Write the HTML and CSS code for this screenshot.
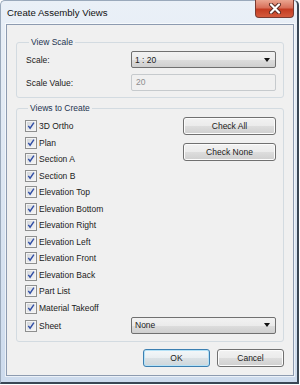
FILE: index.html
```html
<!DOCTYPE html>
<html>

<head>
    <meta charset="UTF-8">
    <title>Create Assembly Views</title>
    <link rel="stylesheet" href="styles.css">
</head>

<body>
    <div class="window">
        <div class="titlebar">
            <span class="title">Create Assembly Views</span>
            <div class="close">
                <svg width="14" height="11" viewBox="0 0 14 11">
                    <path d="M3 1.5 L11 9.5 M11 1.5 L3 9.5" stroke="#5a2a22" stroke-width="4" stroke-linecap="round" />
                    <path d="M3 1.5 L11 9.5 M11 1.5 L3 9.5" stroke="#fff" stroke-width="2.2" stroke-linecap="round" />
                </svg>
            </div>
        </div>

        <div class="client">
            <fieldset class="group scale-group">
                <legend>View Scale</legend>
                <div class="scale-grid">
                    <label>Scale:</label>
                    <div class="select"><span>1 : 20</span><i class="arrow"></i></div>
                    <label>Scale Value:</label>
                    <div class="textbox disabled">20</div>
                </div>
            </fieldset>

            <fieldset class="group views-group">
                <legend>Views to Create</legend>
                <div class="views">
                    <ul class="checks">
                        <li><span class="box"></span>3D Ortho</li>
                        <li><span class="box"></span>Plan</li>
                        <li><span class="box"></span>Section A</li>
                        <li><span class="box"></span>Section B</li>
                        <li><span class="box"></span>Elevation Top</li>
                        <li><span class="box"></span>Elevation Bottom</li>
                        <li><span class="box"></span>Elevation Right</li>
                        <li><span class="box"></span>Elevation Left</li>
                        <li><span class="box"></span>Elevation Front</li>
                        <li><span class="box"></span>Elevation Back</li>
                        <li><span class="box"></span>Part List</li>
                        <li><span class="box"></span>Material Takeoff</li>
                    </ul>
                    <div class="side-buttons">
                        <div class="btn">Check All</div>
                        <div class="btn">Check None</div>
                    </div>
                </div>
                <div class="sheet-row">
                    <div class="check-item"><span class="box"></span>Sheet</div>
                    <div class="select"><span>None</span><i class="arrow"></i></div>
                </div>
            </fieldset>

            <div class="footer">
                <div class="btn btn-default">OK</div>
                <div class="btn">Cancel</div>
            </div>
        </div>
    </div>
</body>

</html>
```

FILE: styles.css
```css
* {
    padding: 0;
    margin: 0;
    box-sizing: border-box;
}

ul {
    list-style: none;
}

body {
    background: #fff;
    font-family: "Liberation Sans", Arial, sans-serif;
    font-size: 8.5px;
    color: #1b1b1b;
}

.window {
    width: 299px;
    height: 384px;
    padding: 0 3px 0 5px;
    border: 1px solid #9aa9bb;
    border-right: 2px solid #3a4755;
    border-bottom: 2px solid #3a4755;
    border-radius: 5px 5px 0 0;
    background: linear-gradient(to bottom, #eaf0f7 0%, #dfe8f3 40%, #cddbed 100%);
    display: flex;
    flex-direction: column;
}

.titlebar {
    height: 23px;
    display: flex;
    align-items: flex-start;
}

.title {
    font-size: 9.6px;
    line-height: 12px;
    padding: 6px 0 0 1px;
    color: #111;
}

.close {
    margin-left: auto;
    margin-top: -1px;
    width: 39px;
    height: 18px;
    border: 1px solid #7a3a30;
    border-top: none;
    border-radius: 0 0 4px 4px;
    background: linear-gradient(to bottom, #eba590 0%, #d8705a 45%, #c43c22 55%, #d45a3c 100%);
    display: flex;
    align-items: center;
    justify-content: center;
}

.client {
    height: 352px;
    border: 1px solid #8d9bb0;
    box-shadow: 0 0 0 1px rgba(255, 255, 255, 0.6);
    background: #f0f0f0;
    padding: 0 9px 8px 9px;
    display: flex;
    flex-direction: column;
}

.group {
    border: 1px solid #d3dbe1;
    border-radius: 3px;
    min-width: 0;
}

.group legend {
    padding: 0 2px;
    margin-left: 3px;
    line-height: 12px;
    color: #1e3450;
}

.scale-group {
    margin-top: 11px;
    padding: 3px 7px 6px 9px;
}

.scale-grid {
    display: grid;
    grid-template-columns: 105px 1fr;
    grid-template-rows: 17px 17px;
    row-gap: 6px;
    align-items: center;
}

.select {
    height: 17px;
    border: 1px solid #707070;
    border-radius: 2px;
    background: linear-gradient(to bottom, #f2f2f2 0%, #ebebeb 50%, #dddddd 51%, #cfcfcf 100%);
    display: flex;
    align-items: center;
    padding: 0 5px 0 3px;
}

.arrow {
    margin-left: auto;
    width: 0;
    height: 0;
    border-left: 3.5px solid transparent;
    border-right: 3.5px solid transparent;
    border-top: 4px solid #111;
}

.textbox {
    height: 17px;
    border: 1px solid #c6cacd;
    border-radius: 2px;
    padding: 0 4px;
    line-height: 15px;
}

.disabled {
    color: #8e8e8e;
    background: #f0f0f0;
}

.views-group {
    margin-top: 4px;
    padding: 4px 7px 7px 8px;
}

.views {
    display: flex;
}

.checks li,
.check-item {
    height: 16.5px;
    display: flex;
    align-items: center;
}

.box {
    width: 12px;
    height: 12px;
    margin-right: 2px;
    border: 1px solid #8e8f8f;
    box-shadow: inset 0 0 0 1px #f4f4f4;
    background-image: url("data:image/svg+xml,%3Csvg xmlns='http://www.w3.org/2000/svg' width='10' height='10'%3E%3Cpath d='M2.3 4.8 L4.1 7.2 L7.9 1.6' fill='none' stroke='%23304ea5' stroke-width='1.4'/%3E%3C/svg%3E"), linear-gradient(135deg, #ced2d7 0%, #e9eaec 60%, #f7f7f7 100%);
    background-repeat: no-repeat;
    background-position: center;
}

.side-buttons {
    margin-left: auto;
    margin-top: -1px;
    width: 93px;
    display: flex;
    flex-direction: column;
    gap: 8px;
}

.btn {
    height: 18px;
    border: 1px solid #707070;
    border-radius: 3px;
    background: linear-gradient(to bottom, #f2f2f2 0%, #ebebeb 50%, #dddddd 51%, #cfcfcf 100%);
    box-shadow: inset 0 0 0 1px #fcfcfc;
    text-align: center;
    line-height: 16px;
    color: #1b1b1b;
}

.sheet-row {
    display: grid;
    grid-template-columns: 106px 1fr;
    align-items: center;
    height: 18px;
}

.sheet-row .check-item {
    height: 18px;
    padding-top: 2px;
}

.footer {
    margin-top: auto;
    display: flex;
    justify-content: flex-end;
    gap: 7px;
}

.footer .btn {
    width: 67px;
}

.btn-default {
    border-color: #3c7fb1;
    box-shadow: inset 0 0 0 1px #b5e2f7;
    background: linear-gradient(to bottom, #f4f8fa 0%, #e9eef1 50%, #dbe2e6 51%, #ced6db 100%);
}
```
